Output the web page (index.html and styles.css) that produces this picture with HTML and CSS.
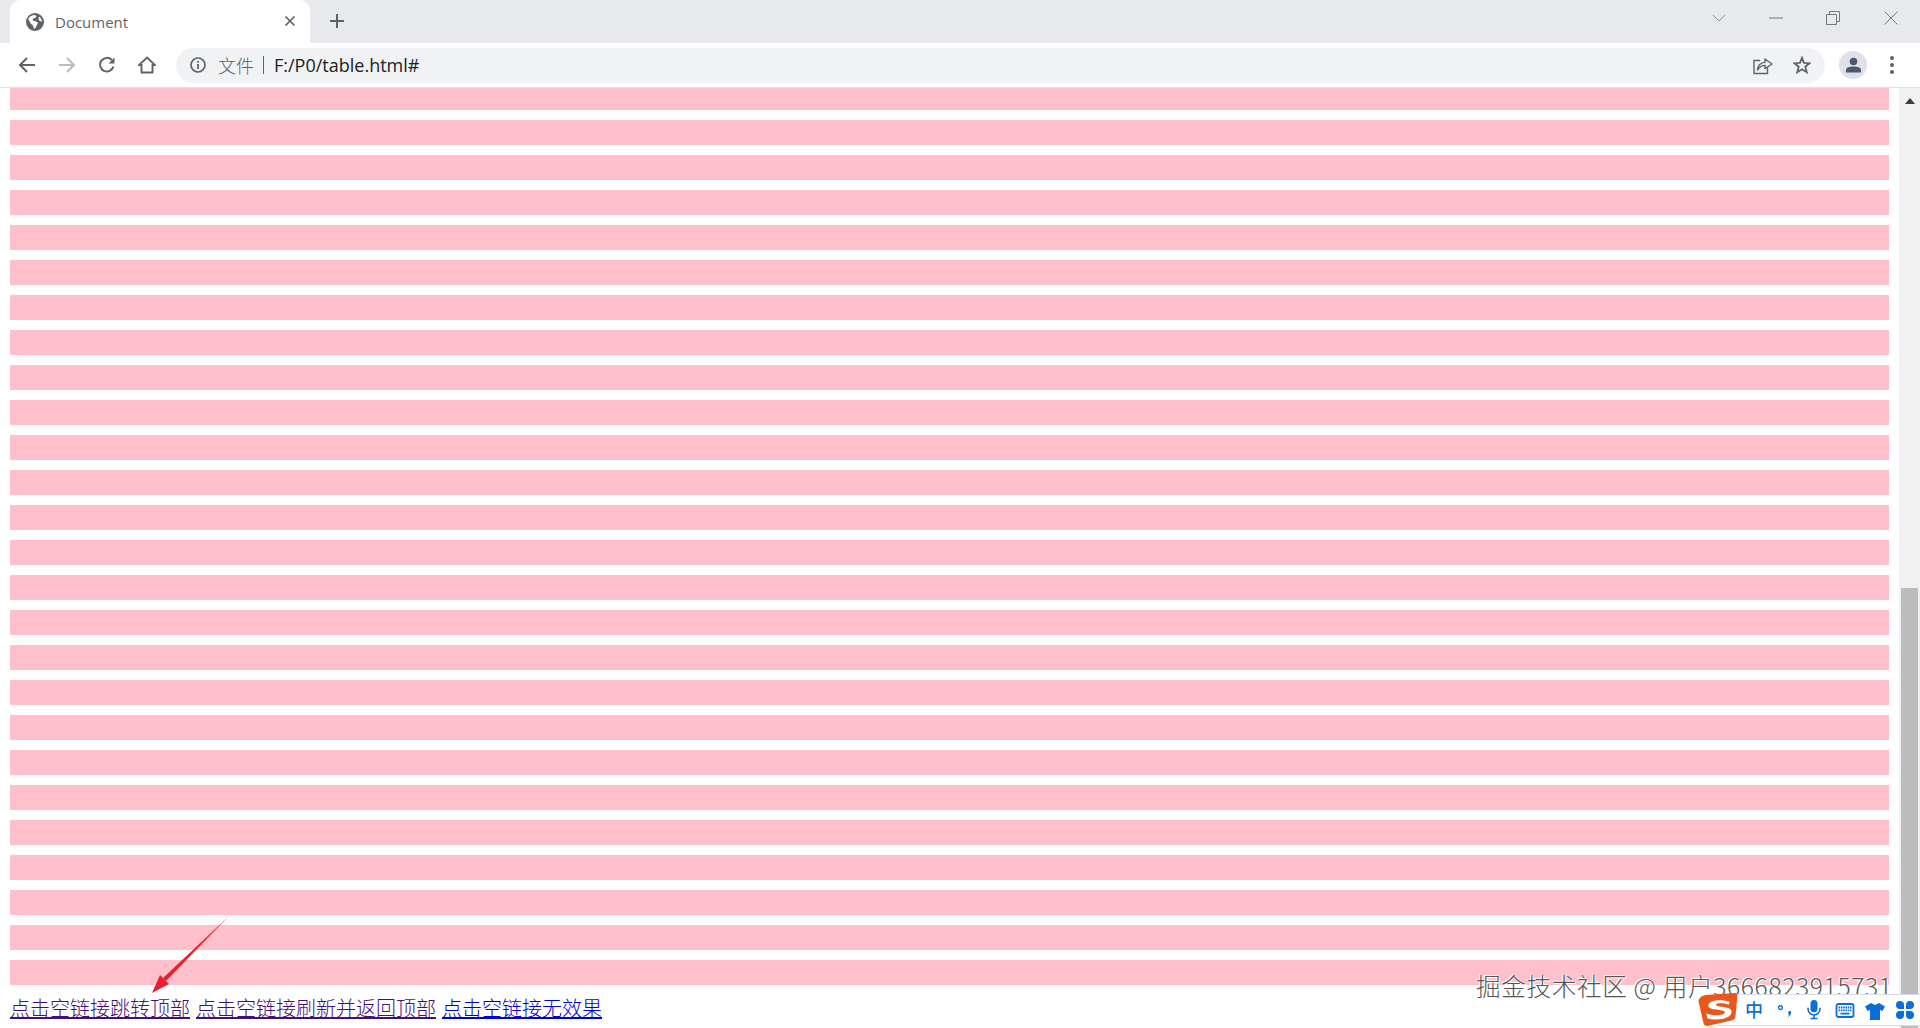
FILE: index.html
```html
<!DOCTYPE html>
<html lang="zh">
<head>
<meta charset="utf-8">
<title>Document</title>
<link rel="stylesheet" href="styles.css">
</head>
<body>
<div class="window">
  <header class="tabstrip">
    <div class="tab">
      <svg class="tab-favicon" viewBox="0 0 18 18"><circle cx="9" cy="9" r="9" fill="#5f6368"/><path d="M2.2 6 C3.5 3.4 6 2 9 2 L10.6 3.4 L9 5 L7 5.4 L6.6 7.4 L10 8.6 L12 9.8 L10.8 12.6 L9 15.4 L7.8 15.4 L7 12.4 L4.6 10.6 Z M13 3.4 C14.8 4.6 15.8 6.6 16 8.6 L14 8.2 L12.6 6.6 Z" fill="#fff"/></svg>
      <span class="tab-title">Document</span>
      <svg class="tab-close" viewBox="0 0 12 12"><path d="M1.5 1.5 L10.5 10.5 M10.5 1.5 L1.5 10.5" stroke="#5f6368" stroke-width="1.7"/></svg>
    </div>
    <svg class="new-tab" viewBox="0 0 14 14"><path d="M7 0 V14 M0 7 H14" stroke="#5f6368" stroke-width="2"/></svg>
    <div class="window-controls">
      <svg class="wc wc-chevron" viewBox="0 0 14 8"><path d="M1 1 L7 7 L13 1" fill="none" stroke="#8d8f93" stroke-width="1"/></svg>
      <svg class="wc wc-min" viewBox="0 0 14 8"><path d="M0 4 H14" stroke="#77797d" stroke-width="1"/></svg>
      <svg class="wc wc-restore" viewBox="0 0 14 14"><path d="M.5 3.5 H10.5 V13.5 H.5 Z M3.5 3.5 V.5 H13.5 V10.5 H10.5" fill="none" stroke="#77797d" stroke-width="1"/></svg>
      <svg class="wc wc-close" viewBox="0 0 14 14"><path d="M.5 .5 L13.5 13.5 M13.5 .5 L.5 13.5" stroke="#77797d" stroke-width="1"/></svg>
    </div>
  </header>
  <nav class="toolbar">
    <svg class="nav-icon" viewBox="0 0 18 18"><path d="M17 9 H2.5 M9 2 L2 9 L9 16" fill="none" stroke="#5f6368" stroke-width="2"/></svg>
    <svg class="nav-icon" viewBox="0 0 18 18"><path d="M1 9 H15.5 M9 2 L16 9 L9 16" fill="none" stroke="#babcbe" stroke-width="2"/></svg>
    <svg class="nav-icon" viewBox="0 0 18 18"><path d="M15.4 10.5 A6.8 6.8 0 1 1 13.8 4" fill="none" stroke="#5f6368" stroke-width="2"/><path d="M16.5 1.5 V7.5 H10.5 Z" fill="#5f6368"/></svg>
    <svg class="nav-icon" viewBox="0 0 18 18"><path d="M9 1.5 L17 9 H14.5 V16.5 H3.5 V9 H1 Z" fill="none" stroke="#5f6368" stroke-width="1.9" stroke-linejoin="miter"/></svg>
    <div class="omnibox">
      <svg class="info" viewBox="0 0 16 16"><circle cx="8" cy="8" r="7" fill="none" stroke="#5f6368" stroke-width="1.7"/><path d="M8 7 V12 M8 4 V5.8" stroke="#5f6368" stroke-width="1.8"/></svg>
      <span class="scheme">文件</span>
      <span class="sep"></span>
      <span class="url">F:/P0/table.html#</span>
      <svg class="share" viewBox="0 0 20 20"><path d="M7 5.5 H1 V18.5 H14.5 V13" fill="none" stroke="#5f6368" stroke-width="1.4"/><path d="M4.5 15 C5 10 8 7.6 12 7.4 V4 L19 9 L12 13.6 V10.4 C9 10.2 6.6 11.8 4.5 15 Z" fill="none" stroke="#5f6368" stroke-width="1.4" stroke-linejoin="round"/></svg>
      <svg class="star" viewBox="0 0 18 18"><path d="M9 1.8 L11 6.8 L16.6 7.2 L12.3 10.7 L13.7 16.2 L9 13.2 L4.3 16.2 L5.7 10.7 L1.4 7.2 L7 6.8 Z" fill="none" stroke="#5f6368" stroke-width="1.8"/></svg>
    </div>
    <div class="avatar"><svg viewBox="0 0 18 16"><circle cx="9" cy="4.2" r="4" fill="#4c5a6e"/><path d="M1 16 V13.5 C1 10.5 5 9.5 9 9.5 C13 9.5 17 10.5 17 13.5 V16 Z" fill="#4c5a6e"/></svg></div>
    <div class="menu"><i></i><i></i><i></i></div>
  </nav>
  <div class="viewport">
    <main class="page">
      <div class="rows">
        <div class="row row-cut"></div>
        <div class="row"></div><div class="row"></div><div class="row"></div><div class="row"></div><div class="row"></div>
        <div class="row"></div><div class="row"></div><div class="row"></div><div class="row"></div><div class="row"></div>
        <div class="row"></div><div class="row"></div><div class="row"></div><div class="row"></div><div class="row"></div>
        <div class="row"></div><div class="row"></div><div class="row"></div><div class="row"></div><div class="row"></div>
        <div class="row"></div><div class="row"></div><div class="row"></div><div class="row"></div><div class="row"></div>
      </div>
      <p class="links"><a class="visited" href="#">点击空链接跳转顶部</a> <a class="visited" href="#">点击空链接刷新并返回顶部</a> <a class="fresh" href="#">点击空链接无效果</a></p>
    </main>
    <aside class="scrollbar">
      <svg class="scroll-up" viewBox="0 0 10 6"><path d="M5 0 L10 6 H0 Z" fill="#3c3c3c"/></svg>
      <div class="thumb"></div>
    </aside>
  </div>
</div>

<svg class="arrow" viewBox="0 0 78 78"><path d="M77.5 .5 L12 62 L15 65 Z" fill="#e8202e"/><path d="M1 77 L9 59 L18 68 Z" fill="#e8202e"/></svg>
<div class="watermark">掘金技术社区 @ 用户3666823915731</div>
<div class="ime">
  <svg class="ime-logo" viewBox="0 0 40 34"><path d="M7 2 L37 0 C39 0 40 1 40 3 L38 24 C38 26 37 27 35 28 L9 34 C7 34 5 33 5 31 L0 9 C0 5 3 3 7 2 Z" fill="#e8581c"/><path d="M32 9 C24 6 10 7 10 13 C10 19 27 16 27 20 C27 23 16 24 8 21 L9 26 C18 29 34 27 34 19 C34 13 18 15 18 12 C18 10 26 10 31 12 Z" fill="#fff"/></svg>
  <span class="ime-zh">中</span>
  <svg class="ime-i ime-punct" viewBox="0 0 20 16"><circle cx="4" cy="4" r="2.2" fill="none" stroke="#0a6fd6" stroke-width="1.6"/><path d="M15 8 C17 8 17 10 16 12 L13 15.5 L14 11.5 C12.5 10 13 8 15 8 Z" fill="#0a6fd6"/></svg>
  <svg class="ime-i ime-mic" viewBox="0 0 16 22"><rect x="4" y="0" width="8" height="14" rx="4" fill="#0a6fd6"/><path d="M1 9 C1 20 15 20 15 9 M8 17 V21 M4 21.2 H12" fill="none" stroke="#0a6fd6" stroke-width="1.8"/></svg>
  <svg class="ime-i ime-kbd" viewBox="0 0 19 15"><rect x="1" y="1" width="17" height="13" rx="2" fill="none" stroke="#0a6fd6" stroke-width="1.8"/><path d="M3 4.5 H16 M3 7.4 H16" stroke="#0a6fd6" stroke-width="1.8" stroke-dasharray="1.6 .7"/><path d="M5 10.6 H14" stroke="#0a6fd6" stroke-width="1.8"/></svg>
  <svg class="ime-i ime-shirt" viewBox="0 0 20 17"><path d="M6 0 L10 2 L14 0 L20 3.5 L17.5 8 L15 7 V17 H5 V7 L2.5 8 L0 3.5 Z" fill="#0a6fd6"/></svg>
  <svg class="ime-i ime-clover" viewBox="0 0 18 18"><path d="M8 8 H4 A4 4 0 1 1 8 4 Z M10 8 V4 A4 4 0 1 1 14 8 Z M8 10 V14 A4 4 0 1 1 4 10 Z M10 10 H14 A4 4 0 1 1 10 14 Z" fill="#0a6fd6"/></svg>
</div>
</body>
</html>
```
FILE: styles.css
```css
* { box-sizing: border-box; }
html, body { margin: 0; padding: 0; height: 100%; overflow: hidden; background: #fff; }

.window { display: flex; flex-direction: column; height: 1028px; width: 1920px; }

/* Tab strip */
.tabstrip { height: 43px; flex: none; display: flex; align-items: center; background: #e7e9ec; }
.tab { width: 300px; height: 43px; margin-left: 10px; background: #fff; border-radius: 10px 10px 0 0; display: flex; align-items: center; padding-left: 16px; }
.tab-favicon { width: 18px; height: 18px; flex: none; }
.tab-title { margin-left: 11px; font: 15px "Open Sans", "Noto Sans", sans-serif; color: #5f6368; flex: 1; }
.tab-close { width: 12px; height: 12px; flex: none; margin-right: 14px; margin-top: -2px; }
.new-tab { width: 14px; height: 14px; margin-left: 20px; flex: none; margin-top: -1px; }
.window-controls { margin-left: auto; display: flex; align-items: center; height: 36px; margin-top: -7px; padding-right: 22px; }
.wc { flex: none; }
.wc-chevron { width: 14px; height: 8px; }
.wc-min { width: 14px; height: 8px; margin-left: 43px; }
.wc-restore { width: 14px; height: 14px; margin-left: 43px; }
.wc-close { width: 14px; height: 14px; margin-left: 44px; }

/* Toolbar */
.toolbar { height: 45px; flex: none; display: flex; align-items: center; background: #fff; border-bottom: 1px solid #dfe1e5; padding: 0 0 0 18px; }
.nav-icon { width: 18px; height: 18px; flex: none; margin-right: 22px; }
.omnibox { width: 1649px; height: 35px; margin-left: -2px; background: #f0f2f4; border-radius: 18px; display: flex; align-items: center; padding-left: 14px; }
.info { width: 16px; height: 16px; flex: none; }
.scheme { margin-left: 12px; font: 18px "Noto Sans CJK SC", sans-serif; font-weight: 300; color: #5f6368; }
.sep { width: 1px; height: 18px; background: #5f6368; margin-left: 9px; }
.url { margin-left: 10px; font: 18px "Open Sans", "Noto Sans", sans-serif; color: #202124; flex: 1; }
.share { width: 20px; height: 20px; flex: none; margin-right: 20px; margin-left: -1px; }
.star { width: 18px; height: 18px; flex: none; margin-right: 14px; }
.avatar { width: 28px; height: 28px; margin-left: 14px; border-radius: 50%; background: #dfe1e7; display: flex; align-items: center; justify-content: center; flex: none; }
.avatar svg { width: 17px; height: 16px; }
.menu { margin-left: 21px; width: 8px; display: flex; flex-direction: column; align-items: center; gap: 3px; flex: none; }
.menu i { width: 4px; height: 4px; border-radius: 50%; background: #5f6368; display: block; }

/* Page */
.viewport { flex: 1; display: flex; min-height: 0; }
.page { flex: 1; min-width: 0; padding: 0 10px; overflow: hidden; }
.rows { display: flex; flex-direction: column; gap: 10px; }
.row { height: 25px; background: #ffc0cb; flex: none; }
.row-cut { height: 22px; }
.links { margin: 11px 0 0; font: 300 20px/26px "Liberation Serif", "Noto Sans CJK SC", serif; word-spacing: 1px; white-space: nowrap; }
.visited { color: #43107a; }
.fresh { color: #0000d8; }

/* Scrollbar */
.scrollbar { width: 21px; flex: none; background: #f1f1f1; display: flex; flex-direction: column; align-items: center; }
.scroll-up { width: 10px; height: 6px; margin-top: 10px; flex: none; }
.thumb { width: 17px; height: 440px; margin-top: 484px; background: #bcbcbc; flex: none; }

/* Overlays */
.arrow { position: absolute; left: 151px; top: 916px; width: 78px; height: 78px; }
.watermark { position: absolute; left: 1476px; top: 968px; font: 24.6px/34px "Noto Sans CJK SC", sans-serif; font-weight: 300; letter-spacing: .65px; color: #555; text-shadow: 1px 1px 0 #fff, -1px -1px 0 #fff, 0 0 1px #fff; white-space: nowrap; }
.ime { position: absolute; left: 1698px; top: 993px; width: 222px; height: 33px; }
.ime::before { content: ""; position: absolute; left: 20px; right: 0; top: 1px; bottom: 0; background: #fff; border: 1px solid #d5dcea; border-right: 0; }
.ime-logo { position: absolute; left: 0; top: 0; width: 40px; height: 33px; }
.ime-zh { position: absolute; left: 47px; top: 4px; font: 18px/24px "Noto Sans CJK SC", sans-serif; font-weight: 500; color: #0a6fd6; }
.ime-i { position: absolute; }
.ime-punct { left: 79px; top: 11px; width: 17px; height: 14px; }
.ime-mic { left: 109px; top: 6px; width: 14px; height: 21px; }
.ime-kbd { left: 137px; top: 10px; width: 20px; height: 15px; }
.ime-shirt { left: 167px; top: 10px; width: 20px; height: 17px; }
.ime-clover { left: 198px; top: 8px; width: 18px; height: 18px; }
```
